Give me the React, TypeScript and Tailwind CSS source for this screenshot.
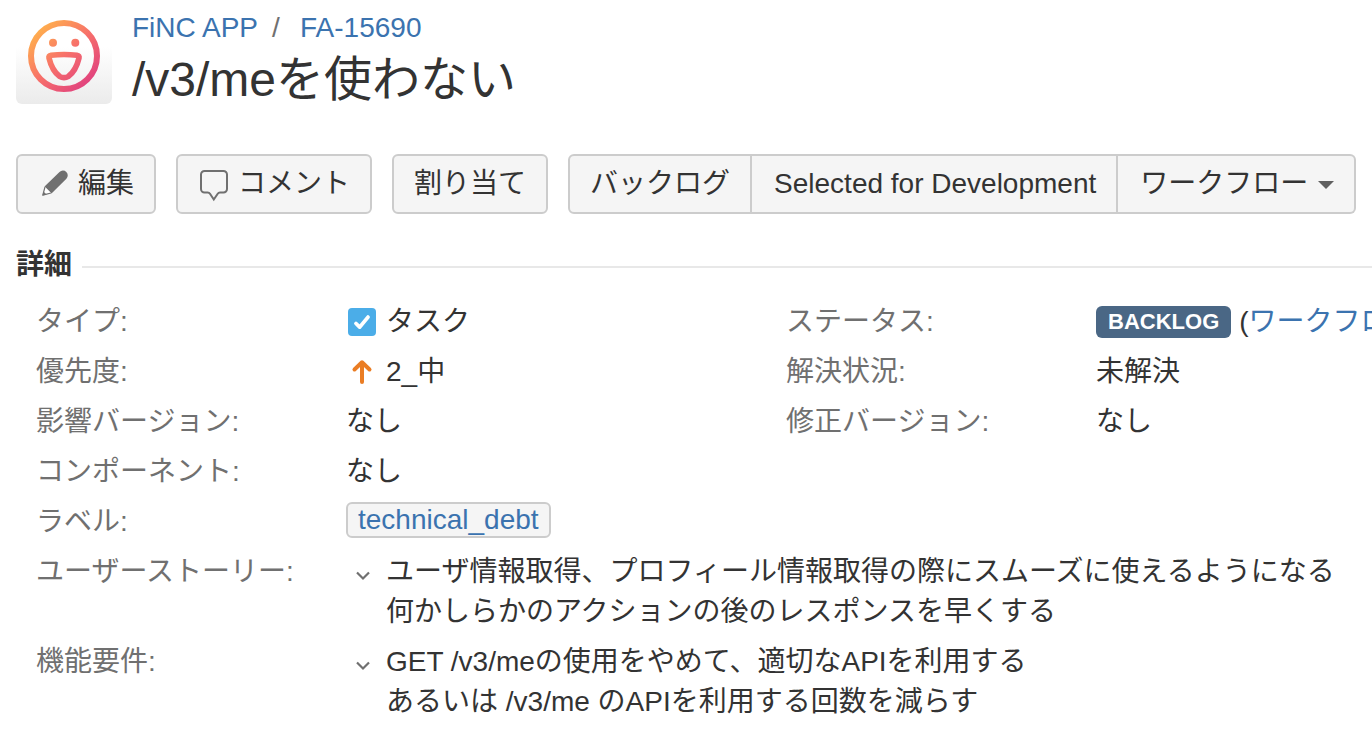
import React from "react";

// Label on the left, value on the right
function Field({ label, children }: { label: string; children: React.ReactNode }) {
  return (
    <div className="flex">
      <dt className="w-[310px] shrink-0 text-[#707070]">{label}:</dt>
      <dd className="flex min-w-0 flex-1 items-start gap-2">{children}</dd>
    </div>
  );
}

// Long text field with a collapse toggle
function TextField({ label, lines }: { label: string; lines: string[] }) {
  return (
    <Field label={label}>
      <button type="button" aria-label={label} className="flex h-10 w-8 shrink-0 items-center justify-center">
        <svg width="32" height="20" viewBox="0 0 32 20" fill="none" stroke="#707070" strokeWidth="2.2">
          <path d="M11 10.5l6 6 6-6" />
        </svg>
      </button>
      <div>
        {lines.map((line) => (
          <p key={line}>{line}</p>
        ))}
      </div>
    </Field>
  );
}

const buttonClass =
  "flex h-[60px] items-center gap-2 border-[#ccc] bg-[#f5f5f5] whitespace-nowrap cursor-pointer hover:bg-[#e9e9e9]";

export default function App() {
  return (
    <div className="min-h-screen overflow-hidden bg-white pb-8 font-['Liberation_Sans','Noto_Sans_CJK_JP',sans-serif] text-[28px] leading-10 text-[#333]">
      <header className="flex gap-5 px-4 pt-2">
        <div className="flex h-24 w-24 shrink-0 items-center justify-center rounded-md bg-linear-to-b from-white from-40% to-[#ebebeb]">
          <svg width="96" height="96" viewBox="0 0 96 96" fill="none">
            <defs>
              <linearGradient id="smile" x1="22" y1="20" x2="74" y2="76" gradientUnits="userSpaceOnUse">
                <stop offset="0" stopColor="#ffb04c" />
                <stop offset="0.5" stopColor="#f7706a" />
                <stop offset="1" stopColor="#e0417f" />
              </linearGradient>
            </defs>
            <circle cx="48" cy="48" r="33" stroke="url(#smile)" strokeWidth="6" />
            <circle cx="37" cy="34.7" r="4" fill="url(#smile)" />
            <circle cx="59.3" cy="34.7" r="4" fill="url(#smile)" />
            <path
              d="M35 47.2Q48 45.8 61 47.2Q63.6 47.5 63 50C61.2 57.5 57.5 64.5 52.5 68.3Q48 71 43.5 68.3C38.5 64.5 34.8 57.5 33 50Q32.4 47.5 35 47.2Z"
              stroke="url(#smile)"
              strokeWidth="5.6"
              strokeLinejoin="round"
            />
          </svg>
        </div>
        <div className="min-w-0">
          <nav className="flex gap-x-3.5 whitespace-nowrap text-[#3b73af]">
            <a href="#project">FiNC APP</a>
            <span className="w-3.5 text-[#707070]">/</span>
            <a href="#issue" className="hover:underline">FA-15690</a>
          </nav>
          <h1 className="text-5xl leading-16">/v3/meを使わない</h1>
        </div>
      </header>

      <div className="mt-[42px] flex gap-5 px-4">
        <button type="button" className={`${buttonClass} rounded-md border-2 px-5`}>
          <svg width="32" height="32" viewBox="0 0 32 32">
            <path d="M6.5 18.500L21.500 4a4.800 4.800 0 0 1 6.900 6.700L13.500 25.500Z" fill="#707070" />
            <path d="M7 19L4.800 27.200L13 25" fill="#fff" stroke="#707070" strokeWidth="1.200" strokeLinejoin="round" />
            <path d="M4.500 27.600l1-4 3 3z" fill="#707070" />
          </svg>
          編集
        </button>
        <button type="button" className={`${buttonClass} rounded-md border-2 px-5`}>
          <svg width="32" height="36" viewBox="0 0 32 36">
            <path
              d="M6.500 5h19a3.500 3.500 0 0 1 3.500 3.500v14.500a3.500 3.500 0 0 1-3.500 3.500h-3.500q-1.500 0-2.300 1.200L15.800 33.500L12 27.700q-.8-1.200-2.300-1.200H6.500A3.500 3.500 0 0 1 3 23V8.500A3.500 3.500 0 0 1 6.500 5z"
              fill="none"
              stroke="#707070"
              strokeWidth="2"
            />
          </svg>
          コメント
        </button>
        <button type="button" className={`${buttonClass} rounded-md border-2 px-5`}>割り当て</button>
        <div className="flex">
          <button type="button" className={`${buttonClass} rounded-l-md border-2 px-5`}>バックログ</button>
          <button type="button" className={`${buttonClass} border-y-2 border-r-2 pr-5 pl-[22px]`}>
            Selected for Development
          </button>
          <button type="button" className={`${buttonClass} rounded-r-md border-y-2 border-r-2 pr-5 pl-[22px]`}>
            ワークフロー
            <svg width="18" height="10" viewBox="0 0 18 10" fill="#606060">
              <path d="M2 2h16l-8 8z" />
            </svg>
          </button>
        </div>
      </div>

      <section>
        <div className="mt-[31px] flex items-center gap-2.5 pl-4">
          <h2 className="font-bold">詳細</h2>
          <div className="mt-1 h-0.5 flex-1 bg-[#e8e8e8]" />
        </div>

        <div className="mt-[17px] grid grid-cols-[minmax(0,32fr)_minmax(0,25fr)] pl-9">
          <dl className="flex flex-col gap-2.5 whitespace-nowrap">
            <Field label="タイプ">
              <svg className="mt-1.5 shrink-0" width="32" height="28" viewBox="0 0 32 28">
                <rect x="2" width="28" height="28" rx="4" fill="#4bade8" />
                <path
                  d="M10 15.500l3.700 3.600 8.300-10"
                  fill="none"
                  stroke="#fff"
                  strokeWidth="3.800"
                  strokeLinecap="round"
                  strokeLinejoin="round"
                />
              </svg>
              タスク
            </Field>
            <Field label="優先度">
              <svg className="mt-1.5 shrink-0" width="32" height="28" viewBox="0 0 32 28">
                <path
                  d="M16 24V4.500M8.500 11.500L16 4.300L23.500 11.500"
                  fill="none"
                  stroke="#ea7d24"
                  strokeWidth="4"
                  strokeLinecap="round"
                  strokeLinejoin="round"
                />
              </svg>
              2_中
            </Field>
            <Field label="影響バージョン">なし</Field>
            <Field label="コンポーネント">なし</Field>
            <Field label="ラベル">
              <a
                href="#technical_debt"
                className="rounded-md border-2 border-[#ccc] bg-[#f5f5f5] px-2.5 leading-8 text-[#3b73af]"
              >
                technical_debt
              </a>
            </Field>
          </dl>
          <dl className="flex flex-col gap-2.5 whitespace-nowrap">
            <Field label="ステータス">
              <span className="mt-1 rounded-md bg-[#4a6785] px-3 text-[22px] leading-8 font-bold text-white">
                BACKLOG
              </span>
              <span>
                (<a href="#workflow" className="text-[#3b73af]">ワークフローを表示</a>)
              </span>
            </Field>
            <Field label="解決状況">未解決</Field>
            <Field label="修正バージョン">なし</Field>
          </dl>
        </div>

        <dl className="mt-2.5 flex flex-col gap-2.5 pl-9">
          <TextField
            label="ユーザーストーリー"
            lines={[
              "ユーザ情報取得、プロフィール情報取得の際にスムーズに使えるようになる",
              "何かしらかのアクションの後のレスポンスを早くする",
            ]}
          />
          <TextField
            label="機能要件"
            lines={["GET /v3/meの使用をやめて、適切なAPIを利用する", "あるいは /v3/me のAPIを利用する回数を減らす"]}
          />
        </dl>
      </section>
    </div>
  );
}
